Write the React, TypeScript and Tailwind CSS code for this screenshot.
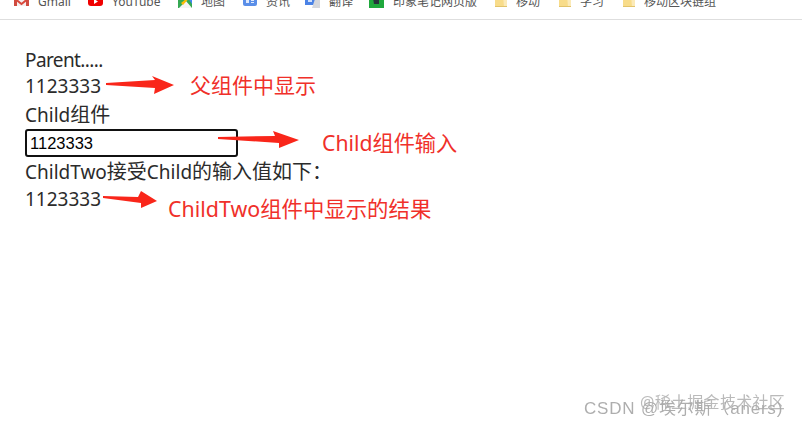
import React from 'react';

const sans = "font-['Noto_Sans','Noto_Sans_CJK_SC',sans-serif]";

const Folder = () => (
  <svg width="12" height="14" viewBox="0 0 12 14" className="shrink-0">
    <path d="M0 0H12V12H0Z" fill="#f8dc8a" />
    <path d="M8 0H12V12H9Z" fill="#fbeab8" />
    <path d="M0 11.5H12" stroke="#e2c36a" strokeWidth="1" />
  </svg>
);

const Bookmark = ({ icon, label, className }: { icon: React.ReactNode; label: string; className: string }) => (
  <div className={`flex items-center shrink-0 ${className}`}>
    {icon}
    <span className="ml-[9px] whitespace-nowrap">{label}</span>
  </div>
);

const Arrow = ({ className, w, h, points }: { className: string; w: number; h: number; points: string }) => (
  <svg className={`absolute ${className}`} width={w} height={h} viewBox={`0 0 ${w} ${h}`}>
    <polygon points={points} fill="#f9261a" />
  </svg>
);

const Zh = ({ children }: { children: React.ReactNode }) => <span className="text-[20px]">{children}</span>;

const App: React.FC = () => {
  return (
    <div className={`relative w-[802px] h-[428px] bg-white overflow-hidden ${sans}`}>
      {/* Bookmarks bar, cut off by the top of the capture */}
      <div className="h-5 border-b border-[#dedede] overflow-hidden flex items-end pb-[10px] pl-[14px] text-[12px] leading-[14px] text-[#555]">
        <Bookmark
          className="w-[74px]"
          label="Gmail"
          icon={
            <svg width="15" height="14" viewBox="0 0 15 14" className="shrink-0">
              <path d="M0 0H15V11H0Z" fill="#f4eeee" />
              <path d="M0 0H3V11H0ZM12 0H15V11H12Z" fill="#cf4b40" />
              <path d="M0 3L7.5 9L15 3" fill="none" stroke="#d9483b" strokeWidth="2" />
            </svg>
          }
        />
        <Bookmark
          className="w-[90px]"
          label="YouTube"
          icon={
            <svg width="15" height="14" viewBox="0 0 15 14" className="shrink-0">
              <rect x="0" y="0" width="15" height="11" rx="3" fill="#f00000" />
              <path d="M6 4L10 6.5L6 9Z" fill="#fff" />
            </svg>
          }
        />
        <Bookmark
          className="w-[65px]"
          label="地图"
          icon={
            <svg width="14" height="14" viewBox="0 0 14 14" className="shrink-0">
              <path d="M0 0H14V13H0Z" fill="#35a852" />
              <path d="M1 13L8 6L14 13Z" fill="#f4f4f4" />
              <path d="M8 0H14V9Z" fill="#4285f4" />
              <path d="M8 4H10.5L5 10L3 8Z" fill="#fbbc05" />
            </svg>
          }
        />
        <Bookmark
          className="w-[62px]"
          label="资讯"
          icon={
            <svg width="14" height="14" viewBox="0 0 14 14" className="shrink-0">
              <rect x="0" y="0" width="14" height="11" rx="2" fill="#5a8ee8" />
              <path d="M3 5H6V8H3ZM8 5H11V6H8ZM8 7H11V8H8Z" fill="#dfe9fb" />
            </svg>
          }
        />
        <Bookmark
          className="w-[64px]"
          label="翻译"
          icon={
            <svg width="15" height="14" viewBox="0 0 15 14" className="shrink-0">
              <path d="M0 0H10V10H0Z" fill="#4a82e6" />
              <path d="M10 4H15V13H7Z" fill="#d5d7dc" />
              <path d="M3 4H7V7H3Z" fill="#cfe0fb" />
            </svg>
          }
        />
        <Bookmark
          className="w-[126px]"
          label="印象笔记网页版"
          icon={
            <svg width="15" height="14" viewBox="0 0 15 14" className="shrink-0">
              <path d="M0 0H15V13H0Z" fill="#1fa83c" />
              <path d="M4 3H10V9H5Z" fill="#26333a" />
            </svg>
          }
        />
        <Bookmark className="w-[64px]" label="移动" icon={<Folder />} />
        <Bookmark className="w-[64px]" label="学习" icon={<Folder />} />
        <Bookmark className="w-[120px]" label="移动区块链组" icon={<Folder />} />
      </div>

      {/* Page content */}
      <div className="pt-[27px] pl-[25px] text-[19px] leading-[27px] text-[#2b2b2b]">
        <div className="h-[26px] leading-[26px] tracking-[-0.6px]">Parent.....</div>
        <div className="h-[27px]">1123333</div>
        <div className="h-[29px] leading-[29px]">
          Child<Zh>组件</Zh>
        </div>
        <input
          readOnly
          value="1123333"
          className="block w-[213px] h-[28px] border-2 border-[#111] rounded-[3px] pl-[3px] text-[16.5px] text-black font-['Liberation_Sans',sans-serif] outline-none"
        />
        <div className="h-[29px] leading-[30px] whitespace-nowrap">
          ChildTwo<Zh>接受</Zh>Child<Zh>的输入值如下：</Zh>
        </div>
        <div className="h-[27px] leading-[27px]">1123333</div>
      </div>

      {/* Red annotations drawn over the capture */}
      <Arrow className="left-[105px] top-[75px]" w={70} h={20} points="1,8 50,5 47,1 69,10 49,19 50,13 1,10" />
      <Arrow className="left-[217px] top-[130px]" w={83} h={20} points="1,7 58,6 56,1 82,10 62,18 62,13 1,9" />
      <Arrow className="left-[102px] top-[190px]" w={56} h={19} points="1,6 36,7 39,1 55,11 39,18 39,13 1,8" />

      <div className="absolute left-[190px] top-[71px] text-[21px] leading-[28px] text-[#f0302a] whitespace-nowrap">父组件中显示</div>
      <div className="absolute left-[322px] top-[129px] text-[21.2px] leading-[28px] text-[#f0302a] whitespace-nowrap">Child组件输入</div>
      <div className="absolute left-[168px] top-[195px] text-[21.4px] leading-[28px] text-[#f0302a] whitespace-nowrap">ChildTwo组件中显示的结果</div>

      {/* Overlapping watermarks */}
      <div className="absolute left-[584px] top-[398px] text-[17px] leading-[22px] tracking-[0.8px] text-[#9a9a9a] opacity-80 blur-[0.4px] whitespace-nowrap font-['Liberation_Sans','Noto_Sans_CJK_SC',sans-serif]">CSDN @埃尔斯（aners)</div>
      <div className="absolute left-[640px] top-[391px] text-[16px] leading-[22px] tracking-[0.3px] text-[#aaa] opacity-80 blur-[0.4px] whitespace-nowrap">@稀土掘金技术社区</div>
    </div>
  );
};

export default App;
